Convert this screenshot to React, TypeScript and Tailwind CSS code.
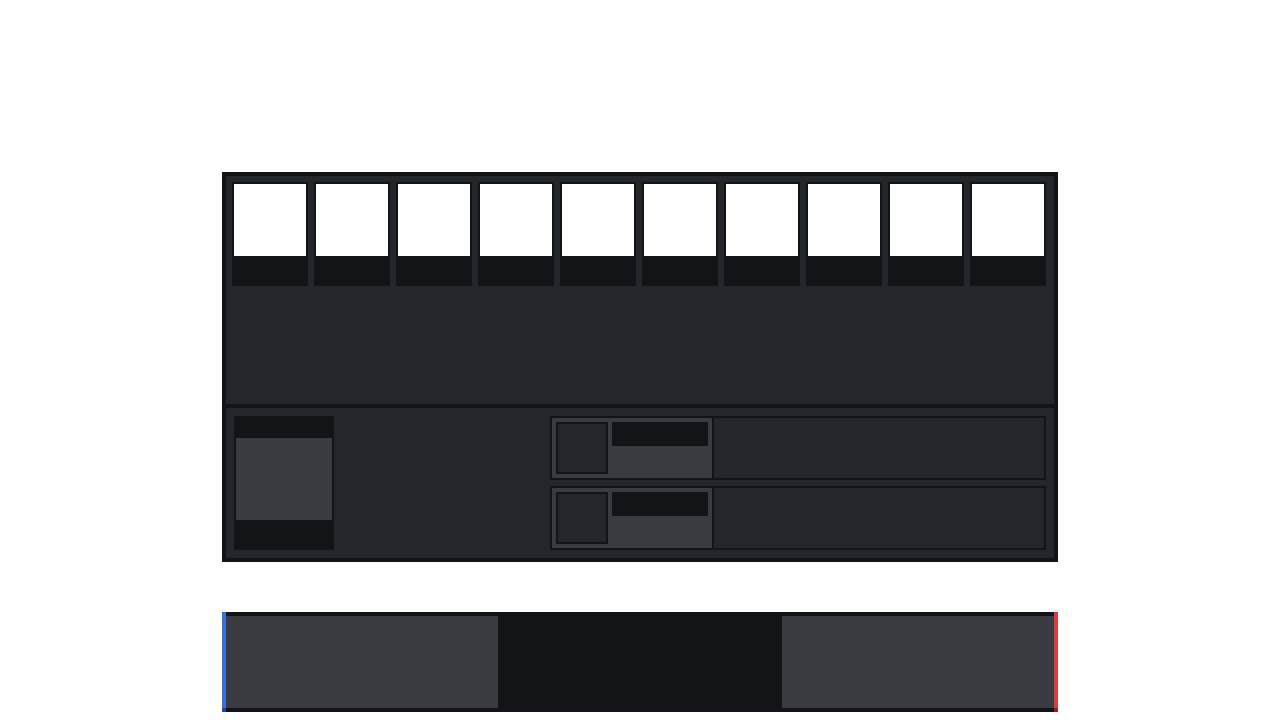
const cards = Array.from({ length: 10 }, (_, i) => i);
const rows = [0, 1];

function Card() {
  return (
    <div className="flex h-[104px] w-[76px] flex-col bg-[#131418] px-[2px] pt-[2px]">
      <div className="h-[72px] w-full bg-white" />
    </div>
  );
}

function Row() {
  return (
    <div className="flex h-16 border-2 border-[#131418]">
      <div className="flex w-[162px] shrink-0 gap-1 border-r-2 border-[#131418] bg-[#3a3b40] p-1">
        <div className="h-[52px] w-[52px] shrink-0 border-2 border-[#131418] bg-[#23262b]" />
        <div className="h-6 w-24 shrink-0 bg-[#131418]" />
      </div>
      <div className="flex-1 bg-[#23262b]" />
    </div>
  );
}

function Stripe({ top, bottom }: { top: string; bottom: string }) {
  return (
    <div className="flex w-1 flex-col">
      <div className={`flex-1 ${top}`} />
      <div className={`h-1 ${bottom}`} />
    </div>
  );
}

export default function App() {
  return (
    <div className="min-h-screen bg-white pt-[172px] font-['Liberation_Sans',sans-serif]">
      <div className="mx-auto flex w-[836px] flex-col gap-1 border-4 border-[#131418] bg-[#131418]">
        <div className="flex h-[228px] items-start gap-[6px] bg-[#23262b] pl-[6px] pt-[6px]">
          {cards.map((c) => (
            <Card key={c} />
          ))}
        </div>
        <div className="flex h-[150px] justify-between bg-[#23262b] p-2">
          <div className="flex h-[134px] w-[100px] flex-col bg-[#131418] px-[2px] pt-[22px]">
            <div className="h-[82px] bg-[#3a3b40]" />
          </div>
          <div className="flex w-[496px] flex-col gap-[6px]">
            {rows.map((r) => (
              <Row key={r} />
            ))}
          </div>
        </div>
      </div>

      <div className="mx-auto mt-[50px] flex h-[100px] w-[836px] bg-[#131418]">
        <Stripe top="bg-[#3574d4]" bottom="bg-[#23449a]" />
        <div className="flex flex-1 py-1">
          <div className="w-[272px] bg-[#3a3b40]" />
          <div className="flex-1" />
          <div className="w-[272px] bg-[#3a3b40]" />
        </div>
        <Stripe top="bg-[#dc3a3e]" bottom="bg-[#8e2028]" />
      </div>
    </div>
  );
}
